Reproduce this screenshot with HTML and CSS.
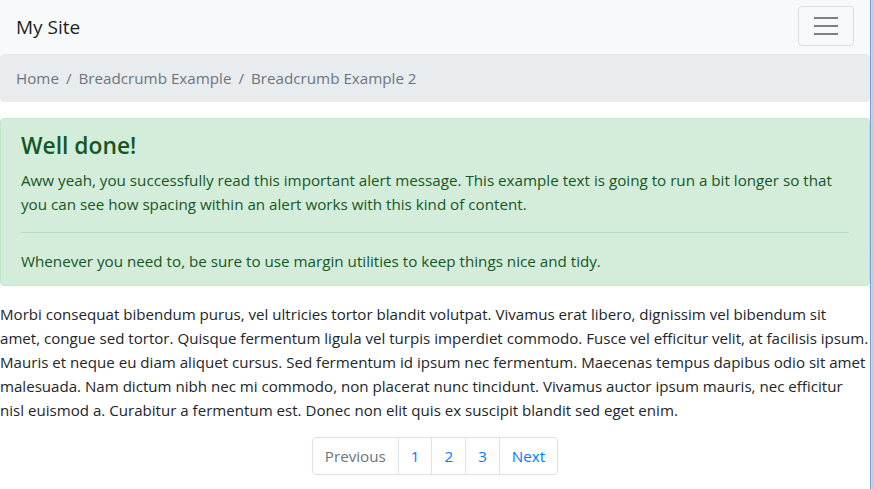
FILE: index.html
```html
<!DOCTYPE html>
<html>
<head>
<meta charset="utf-8">
<link rel="stylesheet" href="styles.css">
</head>
<body>
<div class="frame">
  <div class="site">
    <nav class="navbar">
      <span class="brand">My Site</span>
      <button class="toggler" aria-label="menu">
        <svg width="24" height="20" viewBox="0 0 24 20"><path d="M0 2h24M0 10h24M0 18h24" stroke="#808080" stroke-width="2"/></svg>
      </button>
    </nav>
    <ol class="breadcrumb">
      <li>Home</li>
      <li class="sep">/</li>
      <li>Breadcrumb Example</li>
      <li class="sep">/</li>
      <li>Breadcrumb Example 2</li>
    </ol>
    <div class="alert">
      <h4 class="alert-heading">Well done!</h4>
      <p>Aww yeah, you successfully read this important alert message. This example text is going to run a bit longer so that you can see how spacing within an alert works with this kind of content.</p>
      <hr>
      <p class="last">Whenever you need to, be sure to use margin utilities to keep things nice and tidy.</p>
    </div>
    <p class="body-text">Morbi consequat bibendum purus, vel ultricies tortor blandit volutpat. Vivamus erat libero, dignissim vel bibendum sit amet, congue sed tortor. Quisque fermentum ligula vel turpis imperdiet commodo. Fusce vel efficitur velit, at facilisis ipsum. Mauris et neque eu diam aliquet cursus. Sed fermentum id ipsum nec fermentum. Maecenas tempus dapibus odio sit amet malesuada. Nam dictum nibh nec mi commodo, non placerat nunc tincidunt. Vivamus auctor ipsum mauris, nec efficitur nisl euismod a. Curabitur a fermentum est. Donec non elit quis ex suscipit blandit sed eget enim.</p>
    <ul class="pagination">
      <li class="page-link disabled">Previous</li>
      <li class="page-link">1</li>
      <li class="page-link">2</li>
      <li class="page-link">3</li>
      <li class="page-link">Next</li>
    </ul>
  </div>
  <div class="edge"></div>
</div>
</body>
</html>
```
FILE: styles.css
```css
* { box-sizing: border-box; }
html, body { margin: 0; padding: 0; background: #fff; }
body {
  font-family: "Open Sans", "Noto Sans", sans-serif;
  font-size: 15.2px;
  line-height: 24px;
  color: #212529;
}
.frame { display: flex; width: 874px; height: 489px; overflow: hidden; }
.site { width: 870px; flex: none; }
.edge {
  width: 4px; flex: none;
  border-left: 1px solid #6f9fd6;
  background: linear-gradient(to right, #d8d8d8, #c4c4c4);
}
.navbar {
  height: 54px;
  background: #f8f9fa;
  display: flex;
  align-items: center;
  justify-content: space-between;
  padding: 0 16px;
}
.brand { font-size: 19px; line-height: 30px; color: rgba(0,0,0,.9); }
.toggler {
  width: 56px; height: 40px;
  margin-top: -2px;
  border: 1px solid rgba(0,0,0,.1);
  border-radius: 4px;
  background: transparent;
  display: flex; align-items: center; justify-content: center;
  padding: 0;
}
.breadcrumb {
  list-style: none;
  margin: 0 0 16px;
  padding: 12px 16px;
  background: #e9ecef;
  border-radius: 4px;
  display: flex;
  color: #6c757d;
}
.breadcrumb .sep { padding: 0 7px; }
.alert {
  background: #d4edda;
  border: 1px solid #c3e6cb;
  color: #155724;
  border-radius: 4px;
  padding: 12px 20px;
  margin-bottom: 16px;
}
.alert-heading {
  font-size: 22.8px; line-height: 29px; font-weight: 600;
  margin: 0 0 8px;
}
.alert p { margin: 0 0 16px; }
.alert p.last { margin: 0; }
.alert hr {
  margin: 0 0 16px;
  border: 0;
  border-top: 1px solid #b1dfbb;
}
.body-text { margin: 0 0 15px; font-size: 15.1px; }
.pagination {
  list-style: none; margin: 0; padding: 0;
  display: flex; justify-content: center;
}
.page-link {
  padding: 7px 12px;
  line-height: 22px;
  border: 1px solid #dee2e6;
  margin-left: -1px;
  color: #007bff;
  background: #fff;
}
.page-link:first-child { border-radius: 4px 0 0 4px; margin-left: 0; }
.page-link:last-child { border-radius: 0 4px 4px 0; }
.page-link.disabled { color: #6c757d; }
```
